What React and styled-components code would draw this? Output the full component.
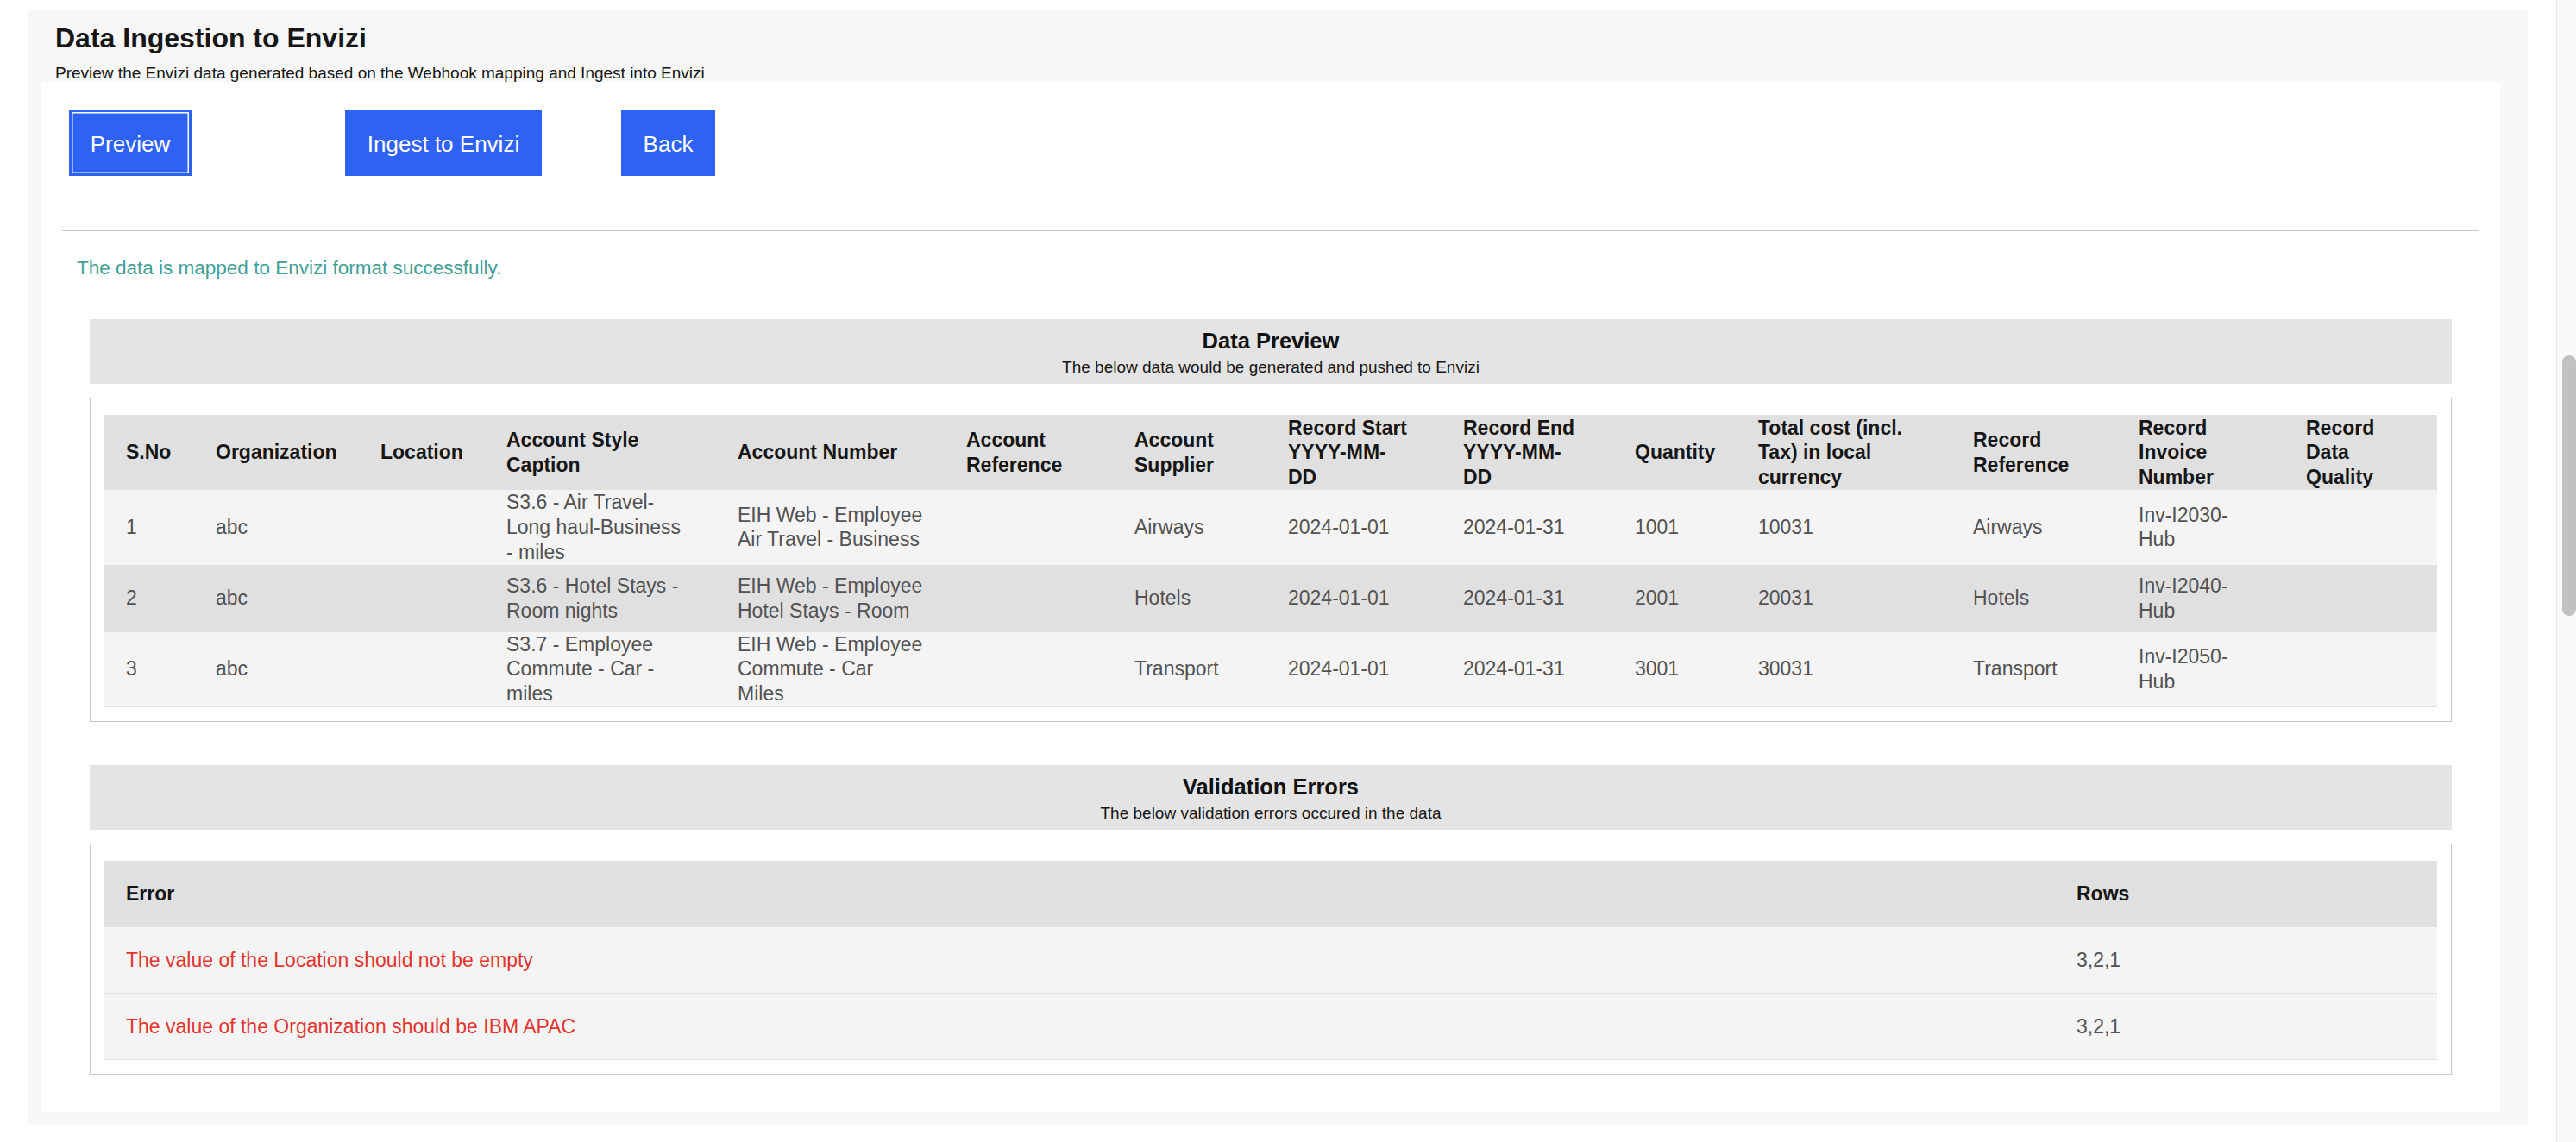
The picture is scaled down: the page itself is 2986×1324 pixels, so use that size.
import React from 'react';
import styled, { createGlobalStyle } from 'styled-components';

const GlobalStyle = createGlobalStyle`
  html, body {
    margin: 0;
    padding: 0;
    background: #ffffff;
    overflow: hidden;
  }
  body {
    font-family: "Liberation Sans", Arial, Helvetica, sans-serif;
    color: #161616;
  }
  * {
    box-sizing: border-box;
  }
`;

const Screen = styled.div`
  display: flex;
  width: 2986px;
  height: 1324px;
  overflow: hidden;
`;

const Viewport = styled.div`
  flex: 1;
  min-width: 0;
  padding: 12px 33px 0 32px;
`;

const Shell = styled.main`
  background: #f7f7f7;
  padding: 14px 32px 15px 16px;
`;

const Header = styled.header`
  padding: 0 16px;
`;

const Title = styled.h1`
  margin: 0;
  font-size: 32px;
  line-height: 37px;
  font-weight: 700;
  color: #161616;
`;

const Subtitle = styled.p`
  margin: 12px 0 0;
  font-size: 19px;
  line-height: 20px;
  color: #161616;
`;

const Panel = styled.section`
  background: #ffffff;
  padding: 32px 24px 43px;
`;

const ButtonRow = styled.div`
  display: flex;
  padding-left: 8px;
`;

const ActionButton = styled.button`
  width: ${p => p.$width}px;
  height: 77px;
  margin-right: ${p => p.$gap || 0}px;
  padding: 4px 0 0;
  border: none;
  background: #2e62f5;
  color: #ffffff;
  font-family: inherit;
  font-size: 26px;
  cursor: pointer;
  box-shadow: ${p => (p.$focused ? 'inset 0 0 0 3px #2e62f5, inset 0 0 0 4.5px #ffffff' : 'none')};
`;

const Divider = styled.hr`
  margin: 63px 0 0;
  border: 0;
  border-top: 1px solid #c8c8c8;
`;

const Success = styled.p`
  margin: 30px 0 0 17px;
  font-size: 22.5px;
  line-height: 26px;
  color: #41a097;
`;

const Section = styled.section`
  margin: ${p => p.$top}px 32px 0;
`;

const SectionBar = styled.div`
  background: #e4e4e4;
  text-align: center;
  padding: 11px 0 8px;
`;

const SectionTitle = styled.h2`
  margin: 0;
  font-size: 25.5px;
  line-height: 29px;
  font-weight: 700;
  color: #111111;
`;

const SectionNote = styled.p`
  margin: 5px 0 0;
  font-size: 19px;
  line-height: 22px;
  color: #161616;
`;

const TableFrame = styled.div`
  margin-top: 16px;
  border: 1px solid #c8c8c8;
  padding: 19px 16px 16px;
  background: #ffffff;
`;

const Table = styled.table`
  width: 100%;
  border-collapse: collapse;
  table-layout: fixed;
  font-size: 23px;
  line-height: 28.75px;
`;

const HeadRow = styled.tr`
  height: 77px;
  background: #e0e0e0;
`;

const Th = styled.th`
  padding: 0.5px 25px;
  text-align: left;
  vertical-align: middle;
  font-weight: 700;
  color: #161616;
  white-space: nowrap;
`;

const BodyRow = styled.tr`
  height: 77px;
  background: ${p => (p.$shade ? '#e0e0e0' : '#f4f4f4')};
  border-bottom: 1px solid #e0e0e0;
`;

const Td = styled.td`
  padding: 0 25px;
  vertical-align: middle;
  color: ${p => (p.$tone === 'error' ? '#e3342f' : '#525252')};
  white-space: nowrap;
`;

const ScrollTrack = styled.div`
  flex: none;
  width: 23px;
  background: #fafafa;
  border-left: 1px solid #e6e6e6;
  padding: 412px 0 0 6px;
`;

const ScrollThumb = styled.div`
  width: 16px;
  height: 302px;
  border-radius: 8px;
  background: #c1c1c1;
`;

const previewColumns = [
  { label: ['S.No'], width: 104 },
  { label: ['Organization'], width: 191 },
  { label: ['Location'], width: 146 },
  { label: ['Account Style', 'Caption'], width: 268 },
  { label: ['Account Number'], width: 265 },
  { label: ['Account', 'Reference'], width: 195 },
  { label: ['Account', 'Supplier'], width: 178 },
  { label: ['Record Start', 'YYYY-MM-', 'DD'], width: 203 },
  { label: ['Record End', 'YYYY-MM-', 'DD'], width: 199 },
  { label: ['Quantity'], width: 143 },
  { label: ['Total cost (incl.', 'Tax) in local', 'currency'], width: 249 },
  { label: ['Record', 'Reference'], width: 192 },
  { label: ['Record', 'Invoice', 'Number'], width: 194 },
  { label: ['Record', 'Data', 'Quality'], width: 177 },
];

const previewRows = [
  [
    '1', 'abc', '',
    ['S3.6 - Air Travel-', 'Long haul-Business', '- miles'],
    ['EIH Web - Employee', 'Air Travel - Business'],
    '', 'Airways', '2024-01-01', '2024-01-31', '1001', '10031', 'Airways',
    ['Inv-I2030-', 'Hub'], '',
  ],
  [
    '2', 'abc', '',
    ['S3.6 - Hotel Stays -', 'Room nights'],
    ['EIH Web - Employee', 'Hotel Stays - Room'],
    '', 'Hotels', '2024-01-01', '2024-01-31', '2001', '20031', 'Hotels',
    ['Inv-I2040-', 'Hub'], '',
  ],
  [
    '3', 'abc', '',
    ['S3.7 - Employee', 'Commute - Car -', 'miles'],
    ['EIH Web - Employee', 'Commute - Car', 'Miles'],
    '', 'Transport', '2024-01-01', '2024-01-31', '3001', '30031', 'Transport',
    ['Inv-I2050-', 'Hub'], '',
  ],
];

const errorColumns = [
  { label: ['Error'], width: 2261 },
  { label: ['Rows'], width: 443 },
];

const errorRows = [
  ['The value of the Location should not be empty', '3,2,1'],
  ['The value of the Organization should be IBM APAC', '3,2,1'],
];

function Lines({ value }) {
  const lines = Array.isArray(value) ? value : [value];
  return lines.map((line, i) => (
    <React.Fragment key={i}>
      {i > 0 && <br />}
      {line}
    </React.Fragment>
  ));
}

function DataTable({ columns, rows, toneFirst }) {
  return (
    <Table>
      <colgroup>
        {columns.map((c, i) => <col key={i} style={{ width: c.width }} />)}
      </colgroup>
      <thead>
        <HeadRow>
          {columns.map((c, i) => <Th key={i}><Lines value={c.label} /></Th>)}
        </HeadRow>
      </thead>
      <tbody>
        {rows.map((row, r) => (
          <BodyRow key={r} $shade={!toneFirst && r === 1}>
            {row.map((cell, i) => (
              <Td key={i} $tone={toneFirst && i === 0 ? 'error' : undefined}>
                <Lines value={cell} />
              </Td>
            ))}
          </BodyRow>
        ))}
      </tbody>
    </Table>
  );
}

function App() {
  return (
    <>
      <GlobalStyle />
      <Screen>
        <Viewport>
          <Shell>
            <Header>
              <Title>Data Ingestion to Envizi</Title>
              <Subtitle>Preview the Envizi data generated based on the Webhook mapping and Ingest into Envizi</Subtitle>
            </Header>
            <Panel>
              <ButtonRow>
                <ActionButton $width={142} $gap={178} $focused>Preview</ActionButton>
                <ActionButton $width={228} $gap={92}>Ingest to Envizi</ActionButton>
                <ActionButton $width={109}>Back</ActionButton>
              </ButtonRow>
              <Divider />
              <Success>The data is mapped to Envizi format successfully.</Success>

              <Section $top={46}>
                <SectionBar>
                  <SectionTitle>Data Preview</SectionTitle>
                  <SectionNote>The below data would be generated and pushed to Envizi</SectionNote>
                </SectionBar>
                <TableFrame>
                  <DataTable columns={previewColumns} rows={previewRows} />
                </TableFrame>
              </Section>

              <Section $top={50}>
                <SectionBar>
                  <SectionTitle>Validation Errors</SectionTitle>
                  <SectionNote>The below validation errors occured in the data</SectionNote>
                </SectionBar>
                <TableFrame>
                  <DataTable columns={errorColumns} rows={errorRows} toneFirst />
                </TableFrame>
              </Section>
            </Panel>
          </Shell>
        </Viewport>
        <ScrollTrack>
          <ScrollThumb />
        </ScrollTrack>
      </Screen>
    </>
  );
}

export default App;
